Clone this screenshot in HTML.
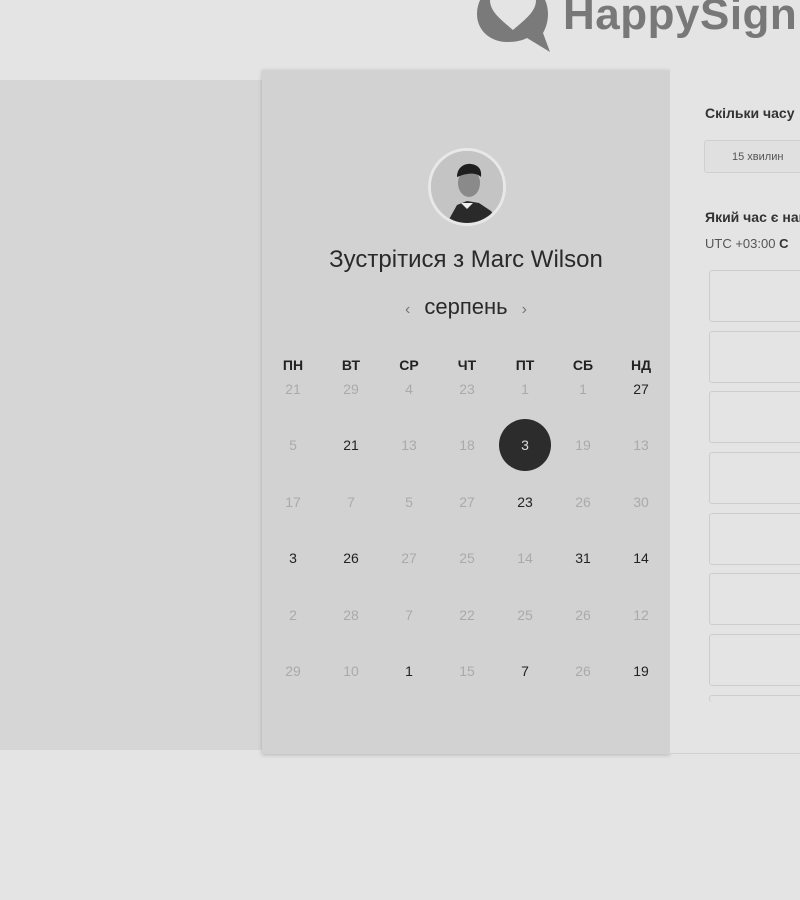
<!DOCTYPE html>
<html><head><meta charset="utf-8"><style>
*{margin:0;padding:0;box-sizing:border-box}
html,body{width:800px;height:900px;overflow:hidden}
body{background:#e4e4e4;font-family:"Liberation Sans",sans-serif;position:relative}
.strip{position:absolute;left:0;top:80px;width:262px;height:670px;background:#d6d6d6}
.cal{position:absolute;left:262px;top:70px;width:408px;height:684px;background:#d2d2d2;box-shadow:0 1px 4px rgba(0,0,0,.2)}
.right{position:absolute;left:670px;top:70px;width:130px;height:684px;background:#e4e4e4;border-bottom:1px solid #d0d0d0;overflow:hidden}
.logo{position:absolute;left:563px;top:-10px;font-size:44px;font-weight:bold;color:#787878;letter-spacing:.5px;white-space:nowrap}
.av{position:absolute;left:428px;top:148px;width:78px;height:78px;border-radius:50%;background:#bdbdbd;border:3px solid #e8e8e8;overflow:hidden}
.t{position:absolute;color:#333;white-space:nowrap}
.d{position:absolute;width:40px;margin-left:-20px;text-align:center;font-size:14px;color:#aaa}
.k{color:#222}
.h{font-weight:bold;color:#222;font-size:14px}
.slot{position:absolute;left:39px;width:100px;height:52px;border:1px solid #cdcdcd;border-radius:3px;background:#e4e4e4}
</style></head><body>
<svg style="position:absolute;left:476px;top:-24px" width="80" height="78" viewBox="0 0 80 78"><path d="M37 4C18 4 1 18 1 38c0 17 14 28 30 28 8 0 14-1 20-4l23 14-7-19c3-5 5-12 5-19C72 18 56 4 37 4z" fill="#7a7a7a"/><path d="M37 54C23 42 14 35 14 24c0-7 6-12 12-12 5 0 9 3 11 7 2-4 6-7 11-7 6 0 12 5 12 12 0 11-9 18-23 30z" fill="#e4e4e4"/></svg>
<div class="logo">HappySign</div>
<div class="strip"></div>
<div class="cal"></div>
<div class="right">
<div class="t" style="left:35px;top:35px;font-weight:bold;font-size:14px">Скільки часу</div>
<div style="position:absolute;left:34px;top:70px;width:120px;height:33px;border:1px solid #cfcfcf;border-radius:3px;background:#e0e0e0;font-size:11px;color:#555;padding:10px 0 0 27px;white-space:nowrap">15 хвилин</div>
<div class="t" style="left:35px;top:139px;font-weight:bold;font-size:14px">Який час є найкращим</div>
<div class="t" style="left:35px;top:166px;font-size:13px;color:#555">UTC +03:00 <b style="color:#333">C</b></div>
<div class="slot" style="top:200px"></div><div class="slot" style="top:261px"></div><div class="slot" style="top:321px"></div><div class="slot" style="top:382px"></div><div class="slot" style="top:443px"></div><div class="slot" style="top:503px"></div><div class="slot" style="top:564px"></div><div class="slot" style="top:625px;height:7px;border-bottom:none"></div>
</div>
<div class="av"><svg width="72" height="72" viewBox="0 0 72 72"><rect width="72" height="72" fill="#c4c4c4"/><path d="M16 72l10-18 10-4 12 2 12 8 8 12z" fill="#2a2a2a"/><path d="M30 52l6 6 6-6z" fill="#eee"/><ellipse cx="38" cy="32" rx="11" ry="14" fill="#8a8a8a"/><path d="M26 26c0-10 8-14 14-13 8 1 11 6 10 13-4-4-12-5-24 0z" fill="#1e1e1e"/></svg></div>
<div class="t" style="left:262px;width:408px;top:246px;text-align:center;font-size:24px;color:#2a2a2a">Зустрітися з Marc Wilson</div>
<div class="t" style="left:262px;width:408px;top:294px;text-align:center;font-size:22px;color:#2a2a2a"><span style="color:#777;font-size:16px;margin-right:14px">‹</span>серпень<span style="color:#777;font-size:16px;margin-left:14px">›</span></div>
<div style="position:absolute;left:499px;top:419px;width:52px;height:52px;border-radius:50%;background:#2c2c2c"></div>
<div id="g"></div>
<script>
var xs=[293,351,409,467,525,583,641],ys=[357,381,437,494,550,607,663];
var hd=["ПН","ВТ","СР","ЧТ","ПТ","СБ","НД"];
var rows=[["21","29","4","23","1","1","27k"],["5","21k","13","18","3w","19","13"],["17","7","5","27","23k","26","30"],["3k","26k","27","25","14","31k","14k"],["2","28","7","22","25","26","12"],["29","10","1k","15","7k","26","19k"]];
var h="";
hd.forEach(function(v,i){h+='<div class="d h" style="left:'+xs[i]+'px;top:'+ys[0]+'px">'+v+'</div>'});
rows.forEach(function(r,j){r.forEach(function(v,i){var c="d",s="";if(v.slice(-1)=="k"){c+=" k";v=v.slice(0,-1)}else if(v.slice(-1)=="w"){v=v.slice(0,-1);s="color:#ddd;"}h+='<div class="'+c+'" style="'+s+'left:'+xs[i]+'px;top:'+ys[j+1]+'px">'+v+'</div>'})});
document.getElementById("g").innerHTML=h;
</script>
</body></html>
